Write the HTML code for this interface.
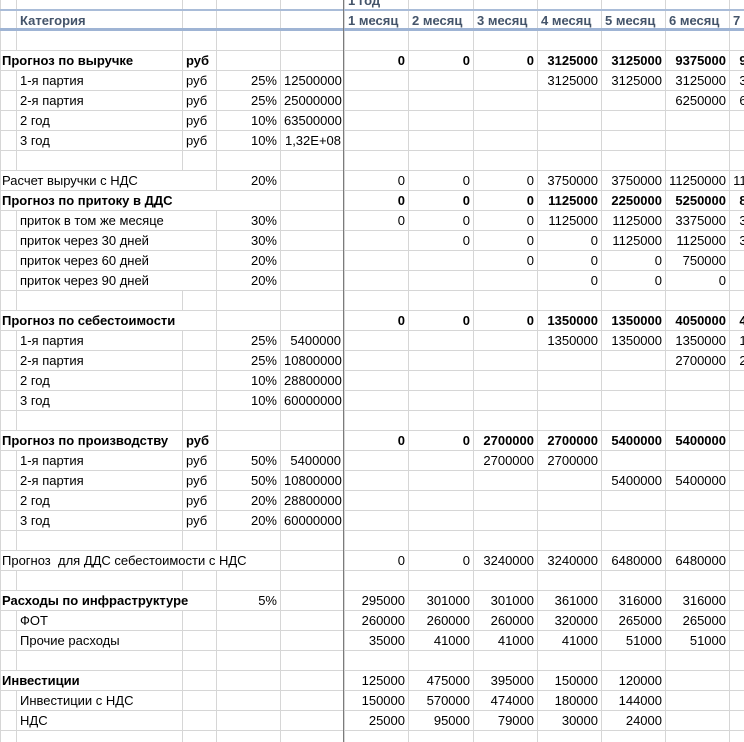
<!DOCTYPE html>
<html><head><meta charset="utf-8"><style>
body{margin:0;width:744px;height:742px;overflow:hidden;background:#fff;position:relative;font-family:"Liberation Sans",Arial,sans-serif;font-size:13px;color:#000}
.wrap{position:absolute;left:0;top:0;width:744px;height:742px;overflow:hidden}
table{border-collapse:collapse;table-layout:fixed;width:793px;position:absolute;left:0;top:0}
td{border:1px solid #d6d6d6;padding:0 3px;height:19px;line-height:19px;white-space:nowrap;overflow:hidden}
tr{height:20px}
tr.top{height:10px}
tr.top td{height:9px;line-height:9px;border-top:none}
.r{text-align:right}
.b td,.b{font-weight:bold}
.h td{color:#44546a;font-weight:bold}
.vl{position:absolute;left:343px;top:0;width:1px;height:742px;background:#7b7b7b}
.bl1{position:absolute;left:0;top:9px;width:744px;height:2px;background:#a9bcd8}
.bl2{position:absolute;left:0;top:28px;width:744px;height:3px;background:#9fb4d4}
</style></head><body>
<div class="wrap">
<table>
<colgroup><col style="width:16px"><col style="width:166px"><col style="width:34px"><col style="width:64px"><col style="width:64px"><col style="width:64px"><col style="width:65px"><col style="width:64px"><col style="width:64px"><col style="width:64px"><col style="width:64px"><col style="width:64px"></colgroup>
<tr class="top"><td></td><td></td><td></td><td></td><td></td><td><div style="margin-top:-9px;color:#44546a;font-weight:bold">1 год</div></td><td></td><td></td><td></td><td></td><td></td><td></td></tr>
<tr class="h"><td></td><td>Категория</td><td></td><td></td><td></td><td>1 месяц</td><td>2 месяц</td><td>3 месяц</td><td>4 месяц</td><td>5 месяц</td><td>6 месяц</td><td>7 месяц</td></tr>
<tr><td></td><td></td><td></td><td></td><td></td><td></td><td></td><td></td><td></td><td></td><td></td><td></td></tr>
<tr class="b"><td colspan="2" style="padding-left:1px">Прогноз по выручке</td><td>руб</td><td></td><td></td><td class="r">0</td><td class="r">0</td><td class="r">0</td><td class="r">3125000</td><td class="r">3125000</td><td class="r">9375000</td><td class="r">9375000</td></tr>
<tr><td></td><td>1-я партия</td><td>руб</td><td class="r">25%</td><td class="r">12500000</td><td></td><td></td><td></td><td class="r">3125000</td><td class="r">3125000</td><td class="r">3125000</td><td class="r">3125000</td></tr>
<tr><td></td><td>2-я партия</td><td>руб</td><td class="r">25%</td><td class="r">25000000</td><td></td><td></td><td></td><td></td><td></td><td class="r">6250000</td><td class="r">6250000</td></tr>
<tr><td></td><td>2 год</td><td>руб</td><td class="r">10%</td><td class="r">63500000</td><td></td><td></td><td></td><td></td><td></td><td></td><td></td></tr>
<tr><td></td><td>3 год</td><td>руб</td><td class="r">10%</td><td class="r">1,32E+08</td><td></td><td></td><td></td><td></td><td></td><td></td><td></td></tr>
<tr><td></td><td></td><td></td><td></td><td></td><td></td><td></td><td></td><td></td><td></td><td></td><td></td></tr>
<tr><td colspan="3" style="padding-left:1px">Расчет выручки с НДС</td><td class="r">20%</td><td></td><td class="r">0</td><td class="r">0</td><td class="r">0</td><td class="r">3750000</td><td class="r">3750000</td><td class="r">11250000</td><td class="r">11250000</td></tr>
<tr class="b"><td colspan="4" style="padding-left:1px">Прогноз по притоку в ДДС</td><td></td><td class="r">0</td><td class="r">0</td><td class="r">0</td><td class="r">1125000</td><td class="r">2250000</td><td class="r">5250000</td><td class="r">8437500</td></tr>
<tr><td></td><td colspan="2">приток в том же месяце</td><td class="r">30%</td><td></td><td class="r">0</td><td class="r">0</td><td class="r">0</td><td class="r">1125000</td><td class="r">1125000</td><td class="r">3375000</td><td class="r">3375000</td></tr>
<tr><td></td><td colspan="2">приток через 30 дней</td><td class="r">30%</td><td></td><td></td><td class="r">0</td><td class="r">0</td><td class="r">0</td><td class="r">1125000</td><td class="r">1125000</td><td class="r">3375000</td></tr>
<tr><td></td><td colspan="2">приток через 60 дней</td><td class="r">20%</td><td></td><td></td><td></td><td class="r">0</td><td class="r">0</td><td class="r">0</td><td class="r">750000</td><td></td></tr>
<tr><td></td><td colspan="2">приток через 90 дней</td><td class="r">20%</td><td></td><td></td><td></td><td></td><td class="r">0</td><td class="r">0</td><td class="r">0</td><td></td></tr>
<tr><td></td><td></td><td></td><td></td><td></td><td></td><td></td><td></td><td></td><td></td><td></td><td></td></tr>
<tr class="b"><td colspan="3" style="padding-left:1px">Прогноз по себестоимости</td><td></td><td></td><td class="r">0</td><td class="r">0</td><td class="r">0</td><td class="r">1350000</td><td class="r">1350000</td><td class="r">4050000</td><td class="r">4050000</td></tr>
<tr><td></td><td>1-я партия</td><td></td><td class="r">25%</td><td class="r">5400000</td><td></td><td></td><td></td><td class="r">1350000</td><td class="r">1350000</td><td class="r">1350000</td><td class="r">1350000</td></tr>
<tr><td></td><td>2-я партия</td><td></td><td class="r">25%</td><td class="r">10800000</td><td></td><td></td><td></td><td></td><td></td><td class="r">2700000</td><td class="r">2700000</td></tr>
<tr><td></td><td>2 год</td><td></td><td class="r">10%</td><td class="r">28800000</td><td></td><td></td><td></td><td></td><td></td><td></td><td></td></tr>
<tr><td></td><td>3 год</td><td></td><td class="r">10%</td><td class="r">60000000</td><td></td><td></td><td></td><td></td><td></td><td></td><td></td></tr>
<tr><td></td><td></td><td></td><td></td><td></td><td></td><td></td><td></td><td></td><td></td><td></td><td></td></tr>
<tr class="b"><td colspan="2" style="padding-left:1px">Прогноз по производству</td><td>руб</td><td></td><td></td><td class="r">0</td><td class="r">0</td><td class="r">2700000</td><td class="r">2700000</td><td class="r">5400000</td><td class="r">5400000</td><td></td></tr>
<tr><td></td><td>1-я партия</td><td>руб</td><td class="r">50%</td><td class="r">5400000</td><td></td><td></td><td class="r">2700000</td><td class="r">2700000</td><td></td><td></td><td></td></tr>
<tr><td></td><td>2-я партия</td><td>руб</td><td class="r">50%</td><td class="r">10800000</td><td></td><td></td><td></td><td></td><td class="r">5400000</td><td class="r">5400000</td><td></td></tr>
<tr><td></td><td>2 год</td><td>руб</td><td class="r">20%</td><td class="r">28800000</td><td></td><td></td><td></td><td></td><td></td><td></td><td></td></tr>
<tr><td></td><td>3 год</td><td>руб</td><td class="r">20%</td><td class="r">60000000</td><td></td><td></td><td></td><td></td><td></td><td></td><td></td></tr>
<tr><td></td><td></td><td></td><td></td><td></td><td></td><td></td><td></td><td></td><td></td><td></td><td></td></tr>
<tr><td colspan="4" style="padding-left:1px">Прогноз&nbsp; для ДДС себестоимости с НДС</td><td></td><td class="r">0</td><td class="r">0</td><td class="r">3240000</td><td class="r">3240000</td><td class="r">6480000</td><td class="r">6480000</td><td></td></tr>
<tr><td></td><td></td><td></td><td></td><td></td><td></td><td></td><td></td><td></td><td></td><td></td><td></td></tr>
<tr><td colspan="3" class="b" style="padding-left:1px">Расходы по инфраструктуре</td><td class="r">5%</td><td></td><td class="r">295000</td><td class="r">301000</td><td class="r">301000</td><td class="r">361000</td><td class="r">316000</td><td class="r">316000</td><td></td></tr>
<tr><td></td><td>ФОТ</td><td></td><td></td><td></td><td class="r">260000</td><td class="r">260000</td><td class="r">260000</td><td class="r">320000</td><td class="r">265000</td><td class="r">265000</td><td></td></tr>
<tr><td></td><td>Прочие расходы</td><td></td><td></td><td></td><td class="r">35000</td><td class="r">41000</td><td class="r">41000</td><td class="r">41000</td><td class="r">51000</td><td class="r">51000</td><td></td></tr>
<tr><td></td><td></td><td></td><td></td><td></td><td></td><td></td><td></td><td></td><td></td><td></td><td></td></tr>
<tr><td colspan="2" class="b" style="padding-left:1px">Инвестиции</td><td></td><td></td><td></td><td class="r">125000</td><td class="r">475000</td><td class="r">395000</td><td class="r">150000</td><td class="r">120000</td><td></td><td></td></tr>
<tr><td></td><td>Инвестиции с НДС</td><td></td><td></td><td></td><td class="r">150000</td><td class="r">570000</td><td class="r">474000</td><td class="r">180000</td><td class="r">144000</td><td></td><td></td></tr>
<tr><td></td><td>НДС</td><td></td><td></td><td></td><td class="r">25000</td><td class="r">95000</td><td class="r">79000</td><td class="r">30000</td><td class="r">24000</td><td></td><td></td></tr>
<tr><td></td><td></td><td></td><td></td><td></td><td></td><td></td><td></td><td></td><td></td><td></td><td></td></tr>
</table>
<div class="bl1"></div><div class="bl2"></div><div class="vl"></div>
</div>
</body></html>
